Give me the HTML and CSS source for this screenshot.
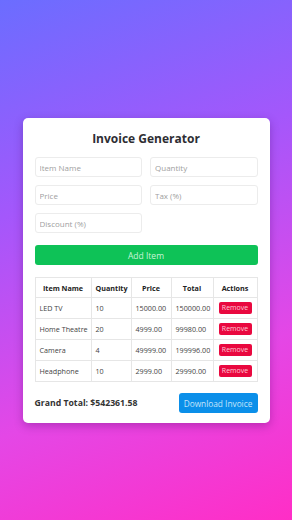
FILE: index.html
```html
<!DOCTYPE html>
<html lang="en">
  <head>
    <meta charset="UTF-8" />
    <title>Invoice Generator</title>
    <link rel="stylesheet" href="styles.css">
  </head>
  <body>
    <div class="card">
      <h1 class="title">Invoice Generator</h1>
      <div class="form">
        <input type="text" placeholder="Item Name" />
        <input type="text" placeholder="Quantity" />
        <input type="text" placeholder="Price" />
        <input type="text" placeholder="Tax (%)" />
        <input type="text" placeholder="Discount (%)" />
      </div>
      <button class="btn-add">Add Item</button>

      <table class="items">
        <colgroup>
          <col style="width: 56px" />
          <col style="width: 40px" />
          <col style="width: 40px" />
          <col style="width: 42px" />
          <col />
        </colgroup>
        <thead>
          <tr>
            <th>Item Name</th>
            <th>Quantity</th>
            <th>Price</th>
            <th>Total</th>
            <th>Actions</th>
          </tr>
        </thead>
        <tbody>
          <tr>
            <td>LED TV</td><td>10</td><td>15000.00</td><td>150000.00</td>
            <td class="act"><button class="btn-remove">Remove</button></td>
          </tr>
          <tr>
            <td>Home Theatre</td><td>20</td><td>4999.00</td><td>99980.00</td>
            <td class="act"><button class="btn-remove">Remove</button></td>
          </tr>
          <tr>
            <td>Camera</td><td>4</td><td>49999.00</td><td>199996.00</td>
            <td class="act"><button class="btn-remove">Remove</button></td>
          </tr>
          <tr>
            <td>Headphone</td><td>10</td><td>2999.00</td><td>29990.00</td>
            <td class="act"><button class="btn-remove">Remove</button></td>
          </tr>
        </tbody>
      </table>

      <div class="footer">
        <span class="grand">Grand Total: $542361.58</span>
        <button class="btn-download">Download Invoice</button>
      </div>
    </div>
  </body>
</html>
```

FILE: styles.css
```css
* {
  margin: 0;
  padding: 0;
  box-sizing: border-box;
}

body {
  width: 292px;
  height: 520px;
  overflow: hidden;
  font-family: "Open Sans", "Liberation Sans", sans-serif;
  background: linear-gradient(160deg, #6b6dff 0%, #a457fb 35%, #e447e6 70%, #ff2ec6 100%);
}

/* white box in the middle */
.card {
  width: 247px;
  margin: 118px auto 0;
  padding: 12px 12px 10px;
  background-color: #ffffff;
  border-radius: 5px;
  box-shadow: 0 3px 10px rgba(60, 0, 90, 0.3);
}

.title {
  font-size: 12px;
  font-weight: 700;
  color: #2e2e33;
  text-align: center;
  line-height: 18px;
  margin-bottom: 9px;
}

.form {
  display: grid;
  grid-template-columns: 1fr 1fr;
  gap: 8px;
}

.form input {
  width: 100%;
  min-width: 0;
  height: 20px;
  padding: 0 4px;
  border: 1px solid #ececec;
  border-radius: 3px;
  font-family: inherit;
  font-size: 8px;
  color: #333;
  outline: none;
}

.form input::placeholder {
  color: #a0a0a0;
}

.btn-add {
  display: block;
  width: 100%;
  height: 20px;
  margin-top: 12px;
  border: none;
  border-radius: 3px;
  background-color: #0ec257;
  color: #c9f4d8;
  font-family: inherit;
  font-size: 8.5px;
}

.items {
  width: 100%;
  margin-top: 12px;
  border-collapse: collapse;
  table-layout: fixed;
  font-size: 7.2px;
  color: #444;
}

.items th,
.items td {
  border: 1px solid #e6e6e6;
  padding: 0 4px;
  text-align: left;
  white-space: nowrap;
  overflow: hidden;
}

.items th {
  height: 20px;
  font-weight: 700;
  color: #222;
  text-align: center;
}

.items td {
  height: 21px;
}

.items td.act {
  text-align: center;
}

.btn-remove {
  width: 33px;
  height: 12px;
  border: none;
  border-radius: 2px;
  background-color: #e9083f;
  color: #ffc9d6;
  font-family: inherit;
  font-size: 7px;
  line-height: 12px;
}

.footer {
  display: flex;
  justify-content: space-between;
  align-items: center;
  margin-top: 11px;
}

.grand {
  font-size: 8.7px;
  font-weight: 700;
  color: #333;
}

.btn-download {
  width: 79px;
  height: 20px;
  border: none;
  border-radius: 3px;
  background-color: #0b8fe9;
  color: #c4e4fb;
  font-family: inherit;
  font-size: 8.3px;
}
```
